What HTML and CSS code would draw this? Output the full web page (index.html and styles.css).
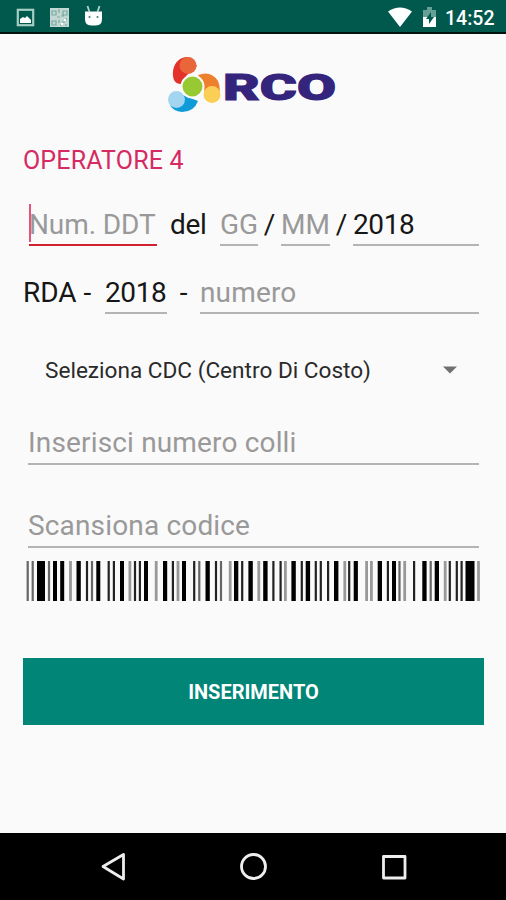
FILE: index.html
```html
<!DOCTYPE html>
<html lang="it">
	<head>
		<title>RCO</title>
		<meta charset="UTF-8">
		<link rel="stylesheet" href="styles.css">
	</head>
	<body>

		<div id="statusBar">
			<svg class="notifications" width="110" height="32" viewBox="0 0 110 32">
				<!-- picture -->
				<rect x="17.8" y="9.8" width="15.4" height="15.4" fill="none" stroke="#a5cdc4" stroke-width="2.2"/>
				<path d="M20 23v-4l3-2 2 1 2-2 4 4v3z" fill="#fff"/>
				<!-- qr code -->
				<rect x="50" y="8" width="19" height="19" fill="#c3d8d3"/>
				<path d="M52 11h4v4h-4zM63 11h4v4h-4zM52 21h4v4h-4zM59 9v4M61 16h3M57 17h3M59 20v3M66 18v3M62 22h3M60 25h2M66 24v2" fill="none" stroke="#7aa99f" stroke-width="1.2"/>
				<path d="M64 19h2v2h-2zM61 23h2v2h-2z" fill="#fff"/>
				<!-- android -->
				<path d="M85 11.500h17v7.500q0 6.500-6 6.500h-5q-6 0-6-6.500z" fill="#fff"/>
				<path d="M89.500 12l-2-6M97.500 12l2-6" stroke="#b5d2cc" stroke-width="1.8"/>
				<circle cx="89.500" cy="17" r="1" fill="#39796d"/>
				<circle cx="97.500" cy="17" r="1" fill="#39796d"/>
			</svg>
			<div class="status_right">
				<svg width="58" height="32" viewBox="0 0 58 32">
					<path d="M1 11.500Q13 3.500 25 11.500L13 27z" fill="#fff"/>
					<path d="M36 10h4V7h5v3h4v7H36z" fill="#66a094"/>
					<path d="M36 17h13v10H36z" fill="#fff"/>
					<path d="M44 12l-5 7h3v5l5-7h-3z" fill="#00594c"/>
				</svg>
				<span class="clock">14:52</span>
			</div>
		</div>

		<div id="main">
			<svg class="logo" width="170" height="58" viewBox="166 55 170 58">
				<path d="M189 57C178 56 170 67 174 80Q176 84 181 84L187 75 197 66Z" fill="#e3312c"/>
				<circle cx="188" cy="65.500" r="8.500" fill="#e9653a"/>
				<path d="M198 75Q211 70 218 81Q222 90 217 98L205 95Q204 83 198 75Z" fill="#ee7f2d"/>
				<circle cx="212" cy="94.500" r="8.500" fill="#fbcf56"/>
				<path d="M180 94L198 101Q194 112 182 112Q173 111 170 105Z" fill="#0e9bd8"/>
				<circle cx="176.500" cy="99.500" r="8.500" fill="#a3d5f0"/>
				<circle cx="192.500" cy="86.500" r="11" fill="#97c933" stroke="#fafafa" stroke-width="2"/>
				<text class="logo_text" x="223" y="100" textLength="113" lengthAdjust="spacingAndGlyphs">RCO</text>
			</svg>

			<div class="operator">OPERATORE 4</div>

			<div class="row row_ddt">
				<div class="field ddt active"><span class="caret"></span>Num. DDT</div>
				<span class="label del">del</span>
				<div class="field gg">GG</div>
				<span class="label slash">/</span>
				<div class="field mm">MM</div>
				<span class="label slash">/</span>
				<div class="field year filled">2018</div>
			</div>

			<div class="row row_rda">
				<span class="label rda">RDA -</span>
				<div class="field rda_year filled">2018</div>
				<span class="label dash">-</span>
				<div class="field numero">numero</div>
			</div>

			<div class="spinner">
				<span>Seleziona CDC (Centro Di Costo)</span>
				<svg width="14" height="8" viewBox="0 0 14 8"><path d="M0 0.500h14l-7 7z" fill="#707070"/></svg>
			</div>

			<div class="row row_colli"><div class="field wide">Inserisci numero colli</div></div>
			<div class="row row_codice"><div class="field wide">Scansiona codice</div></div>

			<svg class="barcode" width="460" height="41" viewBox="23 561 460 41">
				<!-- wide bars -->
				<path fill="#000" d="M37 561h8v40h-8zM53 561h4v40h-4zM60.2 561h4v40h-4zM76.500 561h4.300v40h-4.300zM96.300 561h4v40h-4zM120 561h4v40h-4zM144 561h4v40h-4zM163 561h4.200v40h-4.200zM182 561h4v40h-4zM205.500 561h4.300v40h-4.300zM234 561h4.300v40h-4.300zM248.400 561h4.400v40h-4.400zM263.200 561h4.400v40h-4.400zM291.400 561h4.400v40h-4.400zM305.700 561h4.400v40h-4.400zM334 561h4.400v40h-4.400zM353.700 561h4.200v40h-4.200zM377.700 561h4.300v40h-4.300zM392 561h4v40h-4zM422.300 561h4.300v40h-4.300zM434.700 561h4.300v40h-4.300zM465.500 561h9v40h-9z"/>
				<!-- narrow bars -->
				<path stroke="#222" stroke-width="2.200" d="M87 561v40M108.700 561v40M113.900 561v40M135 561v40M139.900 561v40M172.900 561v40M194.200 561v40M216 561v40M242.200 561v40M273.400 561v40M280.600 561v40M301.800 561v40M315.800 561v40M320.800 561v40M328.100 561v40M349.200 561v40M387.900 561v40M414.100 561v40M449.800 561v40M456.800 561v40M461.600 561v40"/>
				<path stroke="#666" stroke-width="2.200" d="M27.700 561v40M32.700 561v40M49 561v40M92 561v40M199.300 561v40M221 561v40M399.500 561v40M430.700 561v40"/>
				<path stroke="#999" stroke-width="2.800" d="M70.500 561v40M129.900 561v40M156.200 561v40M178 561v40M230.200 561v40M258.800 561v40M285.400 561v40M344.800 561v40M366.600 561v40M371.400 561v40M404.700 561v40M445.200 561v40M478.500 561v40"/>
			</svg>

			<div class="button">INSERIMENTO</div>
		</div>

		<div id="navBar">
			<svg width="506" height="67" viewBox="0 833 506 67" fill="none" stroke="#eee" stroke-width="2.800" stroke-linejoin="round">
				<path d="M103 866.500L123.500 854.500V879z"/>
				<circle cx="253.500" cy="866.500" r="12"/>
				<rect x="383.500" y="856.500" width="21.500" height="21.500"/>
			</svg>
		</div>

	</body>
</html>
```
FILE: styles.css
```css
body {
	margin: 0px;
	width: 506px;
	height: 900px;
	overflow: hidden;
	display: flex;
	flex-direction: column;
	background-color: #fafafa;
	font-family: Roboto, sans-serif;
	font-size: 28px;
	color: #161616;
}
svg {
	display: block;
	flex: none;
}

#statusBar {
	height: 32px;
	flex: none;
	display: flex;
	justify-content: space-between;
	background-color: #00594c;
	border-bottom: 2px solid #04120f;
}
.status_right {
	display: flex;
	padding-right: 11px;
}
.clock {
	width: 50px;
	line-height: 37px;
	font-size: 19.5px;
	font-weight: 500;
	color: white;
	white-space: nowrap;
}

#main {
	flex: 1;
	display: flex;
	flex-direction: column;
	padding: 21px 22px 0px 23px;
}
.logo {
	margin-left: 143px;
}
.logo_text {
	font-family: Roboto, sans-serif;
	font-size: 36px;
	font-weight: 900;
	fill: #34247c;
	stroke: #34247c;
	stroke-width: 1px;
}
.operator {
	margin-top: 31px;
	height: 32px;
	line-height: 34px;
	font-size: 25px;
	letter-spacing: 0.15px;
	color: #d52a63;
}

.row {
	display: flex;
	flex: none;
	padding-right: 5px;
	white-space: nowrap;
}
.field {
	box-sizing: border-box;
	height: 42px;
	line-height: 41px;
	border-bottom: 2px solid #b4b4b4;
	color: #999;
}
.filled {
	color: #161616;
	letter-spacing: -0.4px;
}
.label {
	height: 42px;
	line-height: 41px;
}
.row_ddt {
	margin-top: 28px;
	padding-left: 6px;
}
.active {
	position: relative;
	border-bottom-color: #d3202e;
}
.caret {
	position: absolute;
	left: 0px;
	top: 0px;
	width: 2px;
	height: 38px;
	background-color: #e0557f;
}
.ddt {
	width: 128px;
	letter-spacing: -0.1px;
}
.del {
	width: 50px;
	margin-left: 13px;
	letter-spacing: -0.3px;
}
.gg {
	width: 38px;
}
.slash {
	width: 23px;
	text-align: center;
}
.mm {
	width: 49px;
}
.year {
	flex: 1;
}
.row_rda {
	margin-top: 26px;
}
.rda {
	width: 82px;
}
.rda_year {
	width: 62px;
}
.dash {
	width: 33px;
	text-align: center;
}
.numero {
	flex: 1;
	letter-spacing: 0.15px;
}

.spinner {
	margin-top: 36px;
	height: 40px;
	padding: 0px 27px 0px 22px;
	display: flex;
	align-items: center;
	justify-content: space-between;
	font-size: 22.6px;
	color: #2a2a2a;
}

.row_colli {
	margin-top: 33px;
	padding-left: 5px;
}
.row_codice {
	margin-top: 41px;
	padding-left: 5px;
}
.wide {
	flex: 1;
	line-height: 39px;
	letter-spacing: 0.16px;
}
.barcode {
	margin-top: 13px;
}
.button {
	margin-top: 56px;
	height: 67px;
	line-height: 69px;
	text-align: center;
	font-size: 20px;
	font-weight: bold;
	color: white;
	background-color: #008577;
}

#navBar {
	height: 67px;
	flex: none;
	background-color: black;
}
```
